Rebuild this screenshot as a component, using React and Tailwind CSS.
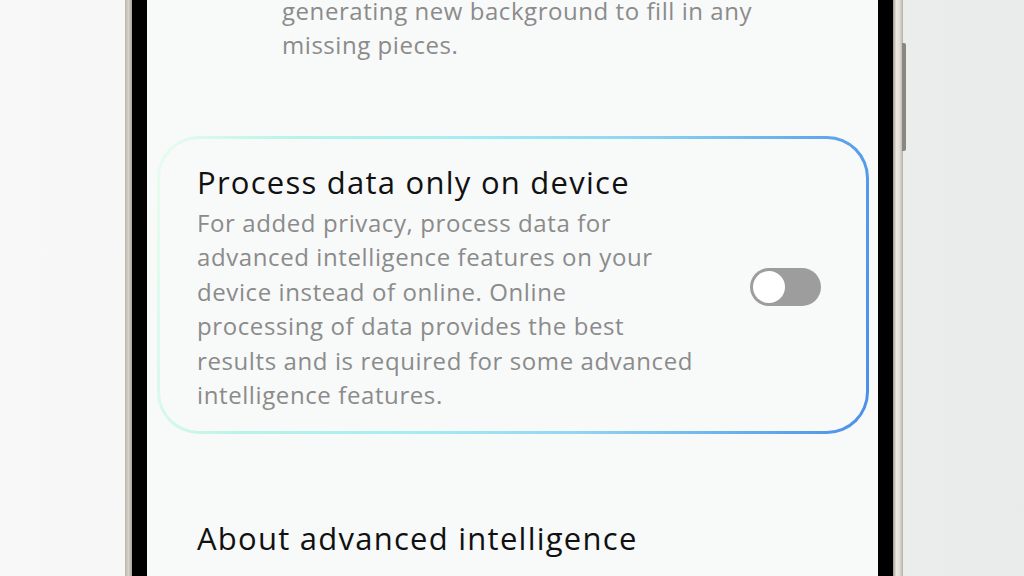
import React from 'react';

const font = { fontFamily: '"Open Sans", "Noto Sans", sans-serif' };

const Toggle = () => (
  <div className="w-[71px] h-[38px] rounded-full bg-[#9d9d9e] flex items-center pl-[3px]">
    <div className="w-[32px] h-[32px] rounded-full bg-white" />
  </div>
);

const App = () => {
  return (
    <div
      className="w-[1024px] h-[576px] flex overflow-hidden bg-[linear-gradient(90deg,#f8f8f8_0%,#f2f2f2_60%,#e9eaea_100%)]"
      style={font}
    >
      {/* left backdrop */}
      <div className="w-[125px] shrink-0" />
      {/* frame edge */}
      <div className="w-[7px] shrink-0 bg-[linear-gradient(90deg,#b9b3a9,#d8d3ca,#a9a49b)]" />
      <div className="w-[15px] shrink-0 bg-black" />

      {/* screen */}
      <div className="w-[731px] shrink-0 bg-[#f8f9f9] flex flex-col">
        <p className="mt-[-6px] pl-[135px] text-[24px] leading-[34px] text-[#8b8b8b] tracking-[0.55px]">
          generating new background to fill in any
          <br />
          missing pieces.
        </p>

        <div className="mt-[74px] ml-[10px] mr-[9px] p-[3px] rounded-[42px] bg-[linear-gradient(100deg,#eafcef_0%,#b8f3e8_18%,#a3eef4_40%,#8fd6f2_62%,#4a8fe8_100%)]">
          <div className="rounded-[39px] bg-[#f8f9f9] flex items-center pl-[37px] pr-[45px] pt-[23px] pb-[19px]">
            <div className="flex-1">
              <h2 className="text-[31px] leading-[40px] text-[#111] tracking-[1.25px]">Process data only on device</h2>
              <p className="mt-[4px] text-[24px] leading-[34.4px] text-[#8b8b8b] tracking-[0.6px]">
                For added privacy, process data for
                <br />
                advanced intelligence features on your
                <br />
                device instead of online. Online
                <br />
                processing of data provides the best
                <br />
                results and is required for some advanced
                <br />
                intelligence features.
              </p>
            </div>
            <Toggle />
          </div>
        </div>

        <h2 className="mt-[84px] pl-[50px] text-[31px] leading-[40px] text-[#111] tracking-[1.25px]">About advanced intelligence</h2>
      </div>

      <div className="w-[15px] shrink-0 bg-black" />
      {/* right frame edge with side key */}
      <div className="relative w-[10px] shrink-0 bg-[linear-gradient(90deg,#9c978f,#ece8e0,#e2ddd4,#b5b0a7)]">
        <div className="absolute left-[9px] top-[43px] w-[4px] h-[108px] rounded-r-[2px] bg-[#8a8680]" />
      </div>
      <div className="flex-1" />
    </div>
  );
};

export default App;
